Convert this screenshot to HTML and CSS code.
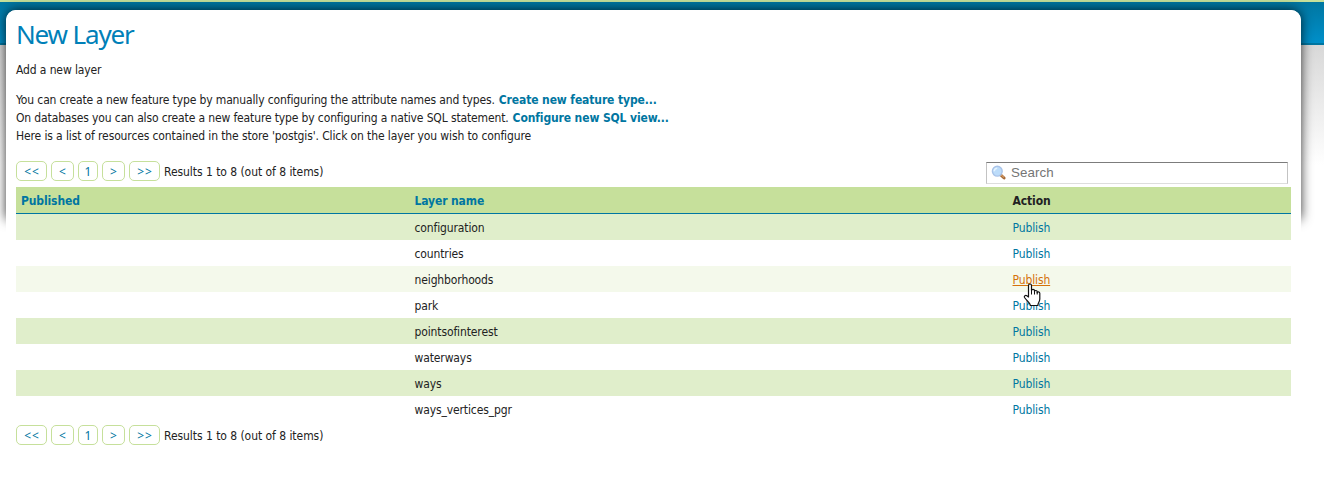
FILE: index.html
```html
<!DOCTYPE html>
<html lang="en">
<head>
<meta charset="utf-8">
<title>New Layer</title>
<link rel="stylesheet" href="styles.css">
</head>
<body>
<main class="page">
<h1 class="title"><span>New Layer</span></h1>
<p class="subtitle"><span>Add a new layer</span></p>
<div class="intro">
<p><span class="lead">You can create a new feature type by manually configuring the attribute names and types.</span><a class="strong-link">Create new feature type...</a></p>
<p><span class="lead">On databases you can also create a new feature type by configuring a native SQL statement.</span><a class="strong-link">Configure new SQL view...</a></p>
<p><span>Here is a list of resources contained in the store 'postgis'. Click on the layer you wish to configure</span></p>
</div>
<div class="toolbar">
<div class="pager"><a class="wide">&lt;&lt;</a><a class="mid">&lt;</a><a class="num">1</a><a class="mid">&gt;</a><a class="wide">&gt;&gt;</a><span class="results">Results 1 to 8 (out of 8 items)</span></div>
<div class="search">
<svg width="16" height="16" viewBox="0 0 16 16"><path d="M9.800 10l3.300 3" stroke="#a66a38" stroke-width="3" stroke-linecap="round"/><path d="M10 9.800l3 2.600" stroke="#e5ad72" stroke-width="1"/><circle cx="6.300" cy="6.200" r="4.900" fill="#bcdcfa" stroke="#a9c3e8" stroke-width="1.400"/><path d="M3.200 6.200a3 3 0 0 1 3-3" stroke="#e6f4ff" stroke-width="1.600" fill="none"/></svg>
<span>Search</span></div>
</div>
<div class="table">
<div class="row head"><a>Published</a><a class="layer">Layer name</a><b>Action</b></div>
<div class="row odd"><i></i><span>configuration</span><a class="pub">Publish</a></div>
<div class="row"><i></i><span>countries</span><a class="pub">Publish</a></div>
<div class="row hover"><i></i><span>neighborhoods</span><a class="pub">Publish<svg class="cursor" width="18" height="24" viewBox="0 0 18 24"><path d="M5.500 14V2.500a1.500 1.500 0 0 1 3 0V7.500c0-1.500 3-1.500 3 0v1c0-1.500 2.700-1.300 2.700.3v1c0-1.500 2.600-1.300 2.600.5V16c0 3-2 4-2 6.500H7.300c0-2.500-3.300-4.500-5.800-8-.8-1.500 1-2.800 2.400-1.700z" fill="#fff" stroke="#111" stroke-width="1.200" stroke-linejoin="round"/><path d="M8.500 7.500v4m3-3.500v3.500m2.700-2.500v2.500" stroke="#111" fill="none"/></svg></a></div>
<div class="row"><i></i><span>park</span><a class="pub">Publish</a></div>
<div class="row odd"><i></i><span>pointsofinterest</span><a class="pub">Publish</a></div>
<div class="row"><i></i><span>waterways</span><a class="pub">Publish</a></div>
<div class="row odd"><i></i><span>ways</span><a class="pub">Publish</a></div>
<div class="row"><i></i><span>ways_vertices_pgr</span><a class="pub">Publish</a></div>
</div>
<div class="pager bottom"><a class="wide">&lt;&lt;</a><a class="mid">&lt;</a><a class="num">1</a><a class="mid">&gt;</a><a class="wide">&gt;&gt;</a><span class="results">Results 1 to 8 (out of 8 items)</span></div>
</main>
</body>
</html>
```
FILE: styles.css
```css
* { box-sizing: border-box; }
html { height: 100%; overflow: hidden; }
body {
  margin: 0;
  height: 487px;
  overflow: hidden;
  padding: 10px 23px 0 6px;
  font: 12px/18px Tahoma, "DejaVu Sans Condensed", "Noto Sans", sans-serif;
  letter-spacing: -0.12px;
  color: #222;
  background:
    linear-gradient(#c6e09b, #c6e09b) 0 0 / 100% 2px no-repeat,
    linear-gradient(#0076a1, #008fc9) 0 2px / 100% 41px no-repeat,
    linear-gradient(#0076a1, #0076a1) 0 43px / 100% 2px no-repeat,
    linear-gradient(#d8d8d8, #fff) 0 45px / 100% 120px no-repeat,
    #fff;
}
.page {
  position: relative;
  z-index: 0;
  height: 477px;
  padding: 0 10px;
  background: #fff;
  border-radius: 10px 10px 0 0;
}
.page::before {
  content: "";
  position: absolute;
  z-index: -1;
  inset: 0 0 auto 0;
  height: 209px;
  border-radius: 10px 10px 0 0;
  box-shadow: 0 0 12px rgba(0, 0, 0, .8);
}
.page::after {
  content: "";
  position: absolute;
  z-index: -1;
  inset: 0;
  background: #fff;
  border-radius: 10px 10px 0 0;
}
p, h1 { margin: 0; }
.title { font: 400 26px/32px Tahoma, "Noto Sans", sans-serif; color: #0080b8; padding-top: 8px; letter-spacing: -1.15px; }
.subtitle { margin-top: 11px; }
.intro { margin-top: 12px; }
.intro p { white-space: nowrap; }
.lead { letter-spacing: -0.135px; }
a { color: #0076a1; }
.strong-link { font-weight: 700; margin-left: 4px; }
.toolbar { display: flex; justify-content: space-between; height: 26px; margin-top: 16px; }
.pager { display: flex; gap: 4px; height: 20px; }
.pager a { height: 20px; border: 1px solid #c6e09b; border-radius: 5px; text-align: center; font-family: Tahoma, "Noto Sans", sans-serif; line-height: 20px; letter-spacing: 1px; text-indent: 1px; }
.wide { width: 31px; }
.mid { width: 23px; }
.num { width: 20px; }
.results { line-height: 22px; white-space: nowrap; letter-spacing: -0.05px; }
.search { width: 302px; height: 22px; margin: 1px 3px 0 0; border: 1px solid #c3c3c3; border-top-color: #7c7c7c; border-bottom-color: #ddd; display: flex; align-items: center; padding-left: 4px; font: 13.330px "Liberation Sans", sans-serif; color: #757575; letter-spacing: 0.1px; }
.search span { margin: -2px 0 0 4px; }
.table { width: 1275px; }
.row { display: grid; grid-template-columns: 393.500px 598px 1fr; height: 26px; line-height: 28px; padding-left: 5px; }
.head { background: #c6e09b; border-bottom: 1px solid #0076a1; height: 27px; font-weight: 700; }
.odd { background: #e0eecb; }
.hover { background: #f4f9eb; }
.pub { position: relative; justify-self: start; }
.hover .pub { color: #d5720b; text-decoration: underline; }
.cursor { position: absolute; z-index: 2; left: 10px; top: 17px; }
.bottom { margin-top: 3px; }
```
